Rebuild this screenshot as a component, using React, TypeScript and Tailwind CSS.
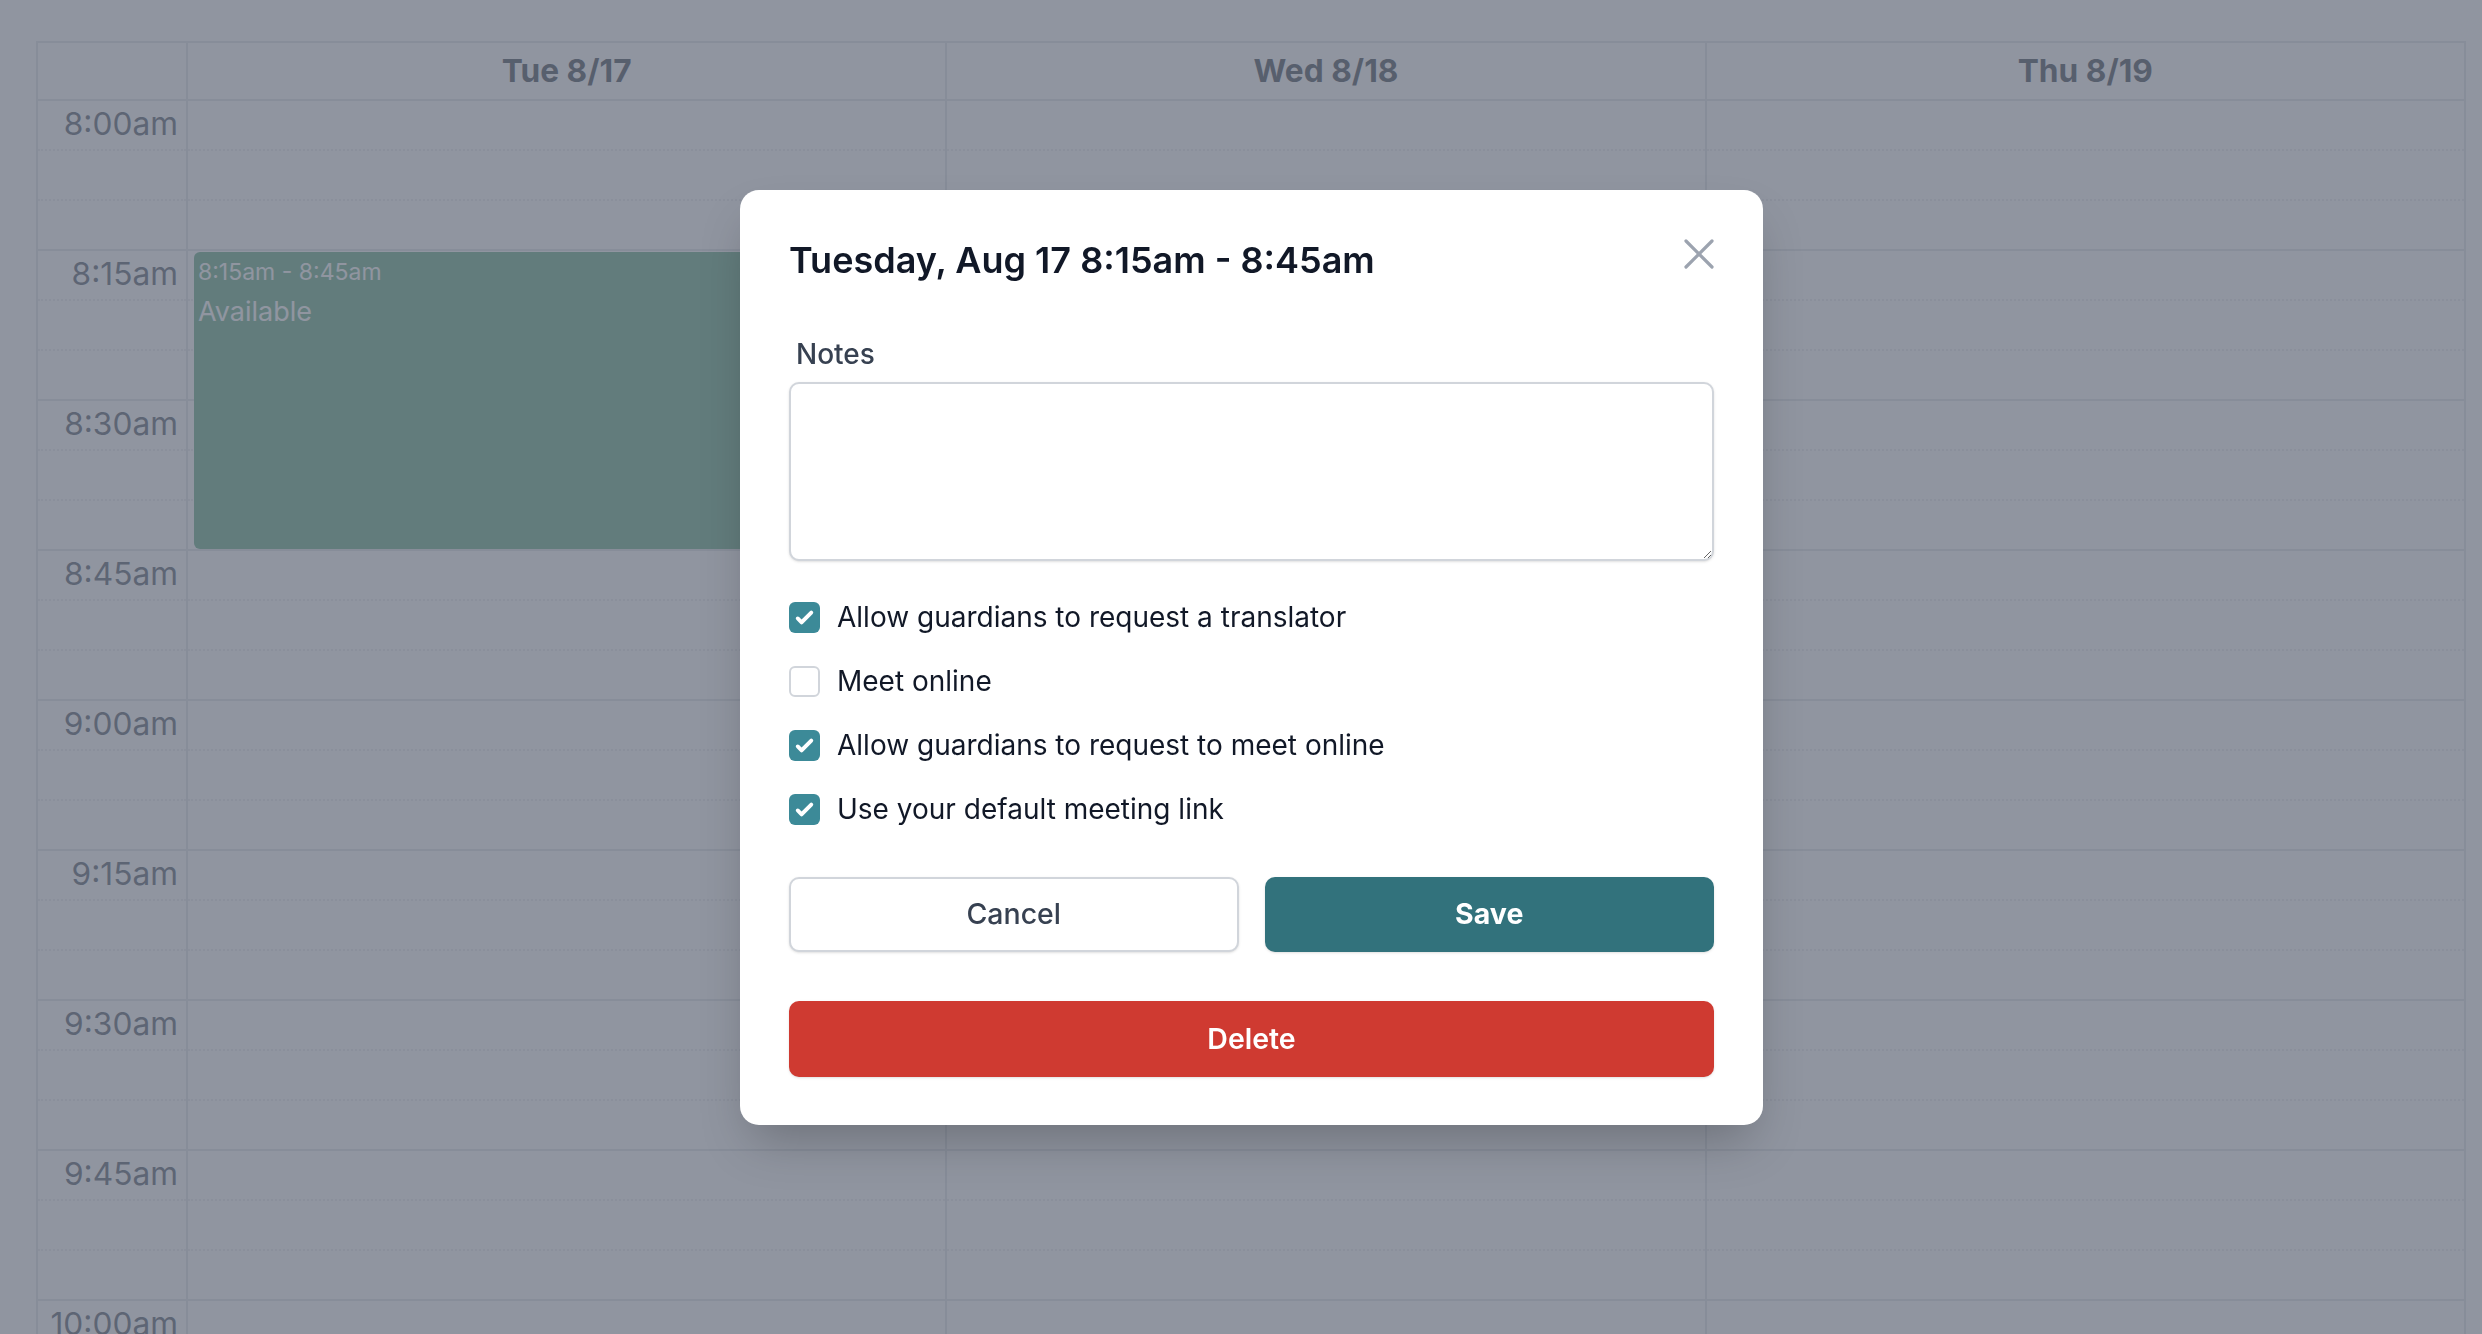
import React from "react";

const times = ["8:00am", "8:15am", "8:30am", "8:45am", "9:00am", "9:15am", "9:30am", "9:45am", "10:00am"];
const days = ["Tue 8/17", "Wed 8/18", "Thu 8/19"];

function Slot({ label }: { label?: string }) {
  return (
    <div className="relative h-[150px] border-b-2 border-[#dcdde2]">
      <div className="absolute left-0 right-0 top-[48px] border-b-2 border-dotted border-[#e6e7eb]" />
      <div className="absolute left-0 right-0 top-[98px] border-b-2 border-dotted border-[#e6e7eb]" />
      {label && (
        <div className="relative pr-[8px] text-right text-[31.7px] leading-[46px] text-[#374151]">{label}</div>
      )}
    </div>
  );
}

function Check({ checked, label }: { checked: boolean; label: string }) {
  return (
    <div className="flex h-[38px] items-center">
      {checked ? (
        <div className="flex h-[31px] w-[31px] items-center justify-center rounded-[6px] bg-[#3c8a98]">
          <svg width="31" height="31" viewBox="0 0 16 16" fill="white">
            <path d="M12.207 4.793a1 1 0 010 1.414l-5 5a1 1 0 01-1.414 0l-2-2a1 1 0 011.414-1.414L6.5 9.086l4.293-4.293a1 1 0 011.414 0z" />
          </svg>
        </div>
      ) : (
        <div className="h-[31px] w-[31px] rounded-[6px] border-2 border-[#d1d5db] bg-white" />
      )}
      <span className="ml-[17px] text-[28px] leading-[38px] text-[#111827]">{label}</span>
    </div>
  );
}

export default function App() {
  return (
    <div className="relative h-[1334px] w-full overflow-hidden bg-white font-['Inter',sans-serif]">
      <div className="pl-[36px] pr-[16px] pt-[41px]">
        <div className="grid grid-cols-[150px_1fr_1fr_1fr] border-l-2 border-t-2 border-[#dcdde2]">
          {/* time column */}
          <div className="border-r-2 border-[#dcdde2]">
            <div className="h-[58px] border-b-2 border-[#dcdde2]" />
            {times.map((t) => (
              <Slot key={t} label={t} />
            ))}
          </div>
          {days.map((d, i) => (
            <div key={d} className="relative border-r-2 border-[#dcdde2]">
              <div className="flex h-[58px] items-center justify-center border-b-2 border-[#dcdde2] text-[31.7px] font-bold text-[#1f2937]">
                {d}
              </div>
              {times.map((t) => (
                <Slot key={t} />
              ))}
              {i === 0 && (
                <div className="absolute left-[6px] right-[6px] top-[209px] h-[297px] rounded-[6px] bg-[#479c70] px-[4px] pt-[5px] text-white">
                  <div className="text-[23px] leading-[30px]">8:15am - 8:45am</div>
                  <div className="text-[27px] leading-[50px]">Available</div>
                </div>
              )}
            </div>
          ))}
        </div>
      </div>

      {/* overlay */}
      <div className="fixed inset-0 bg-[#6b7280]/75" />

      {/* modal */}
      <div className="absolute left-[740px] top-[190px] w-[1023px] rounded-[19px] bg-white px-[49px] pb-[48px] pt-[45px] shadow-2xl">
        <div className="flex items-start justify-between">
          <h2 className="text-[36px] font-semibold leading-[51px] text-[#111827]">Tuesday, Aug 17 8:15am - 8:45am</h2>
          <button className="mt-[4px] text-[#9ca3af]">
            <svg width="30" height="30" viewBox="0 0 30 30" fill="none">
              <path d="M2 2L28 28M28 2L2 28" stroke="currentColor" strokeWidth="3.2" strokeLinecap="round" />
            </svg>
          </button>
        </div>
        <div className="ml-[7px] mt-[49px] text-[28px] font-medium leading-[38px] text-[#374151]">Notes</div>
        <textarea className="mt-[9px] block h-[179px] w-full rounded-[10px] border-2 border-[#d1d5db] bg-white shadow-sm outline-none" />
        <div className="mt-[37px] flex flex-col gap-[26px]">
          <Check checked label="Allow guardians to request a translator" />
          <Check checked={false} label="Meet online" />
          <Check checked label="Allow guardians to request to meet online" />
          <Check checked label="Use your default meeting link" />
        </div>
        <div className="mt-[49px] grid grid-cols-2 gap-[26px]">
          <button className="h-[75px] rounded-[10px] border-2 border-[#d1d5db] bg-white text-[28.5px] font-medium text-[#374151] shadow-sm">
            Cancel
          </button>
          <button className="h-[75px] rounded-[10px] bg-[#32727c] text-[28.5px] font-bold text-white shadow-sm">Save</button>
        </div>
        <button className="mt-[49px] h-[76px] w-full rounded-[10px] bg-[#cf3a31] text-[28.5px] font-semibold text-white shadow-sm">
          Delete
        </button>
      </div>
    </div>
  );
}
